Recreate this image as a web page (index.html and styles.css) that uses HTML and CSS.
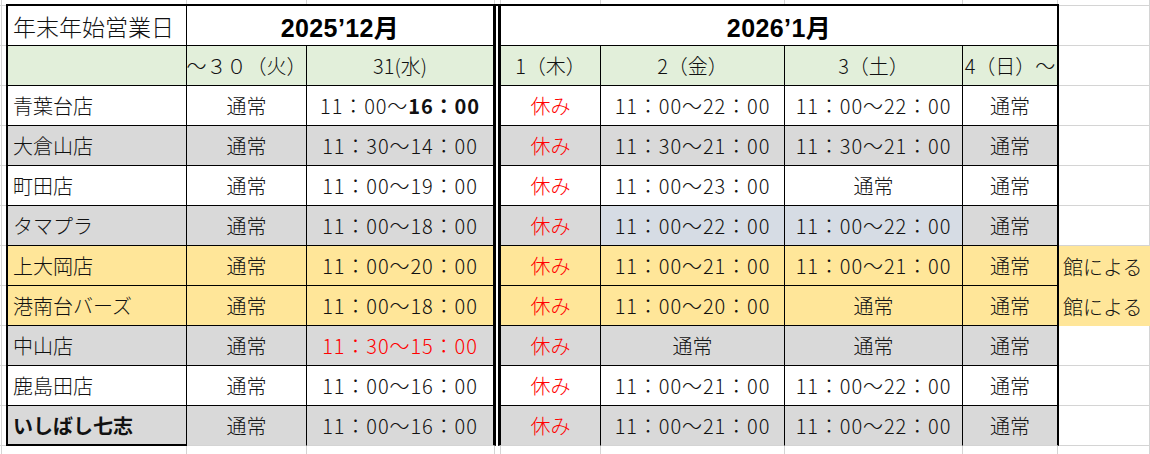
FILE: index.html
```html
<!DOCTYPE html>
<html lang="ja">
<head>
<meta charset="utf-8">
<title>年末年始営業日</title>
<link rel="stylesheet" href="styles.css">
</head>
<body>
<div class="sheet">
  <div class="c name top title">年末年始営業日</div>
  <div class="c top month m1 cc">2025’12月</div>
  <div class="gapcol"></div>
  <div class="c top month m2 cd cg">2026’1月</div>

  <div class="row green">
    <div class="c name"></div>
    <div class="c">～３０（火）</div>
    <div class="c cc">31(水)</div>
    <div class="c cd">1（木）</div>
    <div class="c">2（金）</div>
    <div class="c">3（土）</div>
    <div class="c cg">4（日）～</div>
  </div>

  <div class="row">
    <div class="c name">青葉台店</div>
    <div class="c">通常</div>
    <div class="c cc t">11：00～<b>16：00</b></div>
    <div class="c cd red">休み</div>
    <div class="c t">11：00～22：00</div>
    <div class="c t">11：00～22：00</div>
    <div class="c cg">通常</div>
  </div>

  <div class="row grey">
    <div class="c name">大倉山店</div>
    <div class="c">通常</div>
    <div class="c cc t">11：30～14：00</div>
    <div class="c cd red">休み</div>
    <div class="c t">11：30～21：00</div>
    <div class="c t">11：30～21：00</div>
    <div class="c cg">通常</div>
  </div>

  <div class="row">
    <div class="c name">町田店</div>
    <div class="c">通常</div>
    <div class="c cc t">11：00～19：00</div>
    <div class="c cd red">休み</div>
    <div class="c t">11：00～23：00</div>
    <div class="c">通常</div>
    <div class="c cg">通常</div>
  </div>

  <div class="row grey">
    <div class="c name">タマプラ</div>
    <div class="c">通常</div>
    <div class="c cc t">11：00～18：00</div>
    <div class="c cd red">休み</div>
    <div class="c t blue">11：00～22：00</div>
    <div class="c t blue">11：00～22：00</div>
    <div class="c cg">通常</div>
  </div>

  <div class="row yellow">
    <div class="c name">上大岡店</div>
    <div class="c">通常</div>
    <div class="c cc t">11：00～20：00</div>
    <div class="c cd red">休み</div>
    <div class="c t">11：00～21：00</div>
    <div class="c t">11：00～21：00</div>
    <div class="c cg">通常</div>
    <div class="note">館による</div>
  </div>

  <div class="row yellow">
    <div class="c name">港南台バーズ</div>
    <div class="c">通常</div>
    <div class="c cc t">11：00～18：00</div>
    <div class="c cd red">休み</div>
    <div class="c t">11：00～20：00</div>
    <div class="c">通常</div>
    <div class="c cg">通常</div>
    <div class="note">館による</div>
  </div>

  <div class="row grey">
    <div class="c name">中山店</div>
    <div class="c">通常</div>
    <div class="c cc t red">11：30～15：00</div>
    <div class="c cd red">休み</div>
    <div class="c">通常</div>
    <div class="c">通常</div>
    <div class="c cg">通常</div>
  </div>

  <div class="row">
    <div class="c name">鹿島田店</div>
    <div class="c">通常</div>
    <div class="c cc t">11：00～16：00</div>
    <div class="c cd red">休み</div>
    <div class="c t">11：00～21：00</div>
    <div class="c t">11：00～22：00</div>
    <div class="c cg">通常</div>
  </div>

  <div class="row grey last">
    <div class="c name strong">いしばし七志</div>
    <div class="c">通常</div>
    <div class="c cc t">11：00～16：00</div>
    <div class="c cd red">休み</div>
    <div class="c t">11：00～21：00</div>
    <div class="c t">11：00～22：00</div>
    <div class="c cg">通常</div>
  </div>
</div>
</body>
</html>
```

FILE: styles.css
```css
* {
  box-sizing: border-box;
}

html,
body {
  margin: 0;
  background: #fff;
}

body {
  font-family: "Noto Sans CJK JP", "Noto Sans", sans-serif;
  font-weight: 300;
  color: #111;
}

.sheet {
  width: 1150px;
  height: 454px;
  overflow: hidden;
  padding: 4px 0 0 6px;
  display: grid;
  grid-template-columns: 181px 120px 189px 2px 103px 184px 178px 96px 91px;
  grid-template-rows: 42px repeat(10, 40px);
  background-color: #fff;
  background-image:
    linear-gradient(#d4d4d4, #d4d4d4),
    linear-gradient(#d4d4d4, #d4d4d4),
    linear-gradient(#d4d4d4, #d4d4d4),
    linear-gradient(#d4d4d4, #d4d4d4),
    linear-gradient(#d4d4d4, #d4d4d4),
    linear-gradient(#d4d4d4, #d4d4d4),
    linear-gradient(#d4d4d4, #d4d4d4),
    linear-gradient(#d4d4d4, #d4d4d4),
    linear-gradient(#d4d4d4, #d4d4d4),
    linear-gradient(#d4d4d4, #d4d4d4),
    linear-gradient(#d4d4d4 1px, transparent 1px);
  background-size:
    1px 100%, 1px 100%, 1px 100%, 1px 100%, 1px 100%,
    1px 100%, 1px 100%, 1px 100%, 1px 100%, 1px 100%,
    100% 40px;
  background-position:
    1px 0, 186px 0, 306px 0, 494px 0, 500px 0,
    600px 0, 784px 0, 962px 0, 1057px 0, 1149px 0,
    0 5px;
  background-repeat:
    no-repeat, no-repeat, no-repeat, no-repeat, no-repeat,
    no-repeat, no-repeat, no-repeat, no-repeat, no-repeat,
    repeat;
}

.row {
  display: contents;
}

.c {
  display: flex;
  align-items: center;
  justify-content: center;
  background: #fff;
  border-right: 1px solid #000;
  border-bottom: 1px solid #000;
  font-size: 20px;
  white-space: nowrap;
}

.t {
  letter-spacing: 0.9px;
}

.t b {
  font-weight: 700;
}

.name {
  grid-column-start: 1;
  border-left: 2px solid #000;
  justify-content: flex-start;
  padding-left: 5px;
}

.top {
  border-top: 2px solid #000;
}

.cc {
  border-right-width: 3px;
}

.cd {
  border-left: 3px solid #000;
}

.cg {
  border-right-width: 2px;
}

.gapcol {
  grid-column: 4;
  grid-row: 1 / span 11;
  background: #fff;
  border-top: 2px solid #000;
}

.title {
  font-size: 23px;
}

.month {
  font-family: "Liberation Sans", "Noto Sans CJK JP", sans-serif;
  font-weight: 700;
  font-size: 25px;
  letter-spacing: 0.4px;
  color: #000;
}

.m1 {
  grid-column: span 2;
}

.m2 {
  grid-column: span 4;
}

.strong {
  font-weight: 700;
}

.green .c {
  background: #e2efda;
}

.grey .c {
  background: #d9d9d9;
}

.yellow .c,
.note {
  background: #ffe699;
}

.c.blue {
  background: #d6dce4;
}

.red {
  color: #f00;
}

.note {
  display: flex;
  align-items: center;
  padding-left: 4px;
  font-size: 20px;
  white-space: nowrap;
}

.last .c {
  border-bottom-color: #d4d4d4;
}

.last .name {
  border-bottom: 2px solid #000;
}
```
